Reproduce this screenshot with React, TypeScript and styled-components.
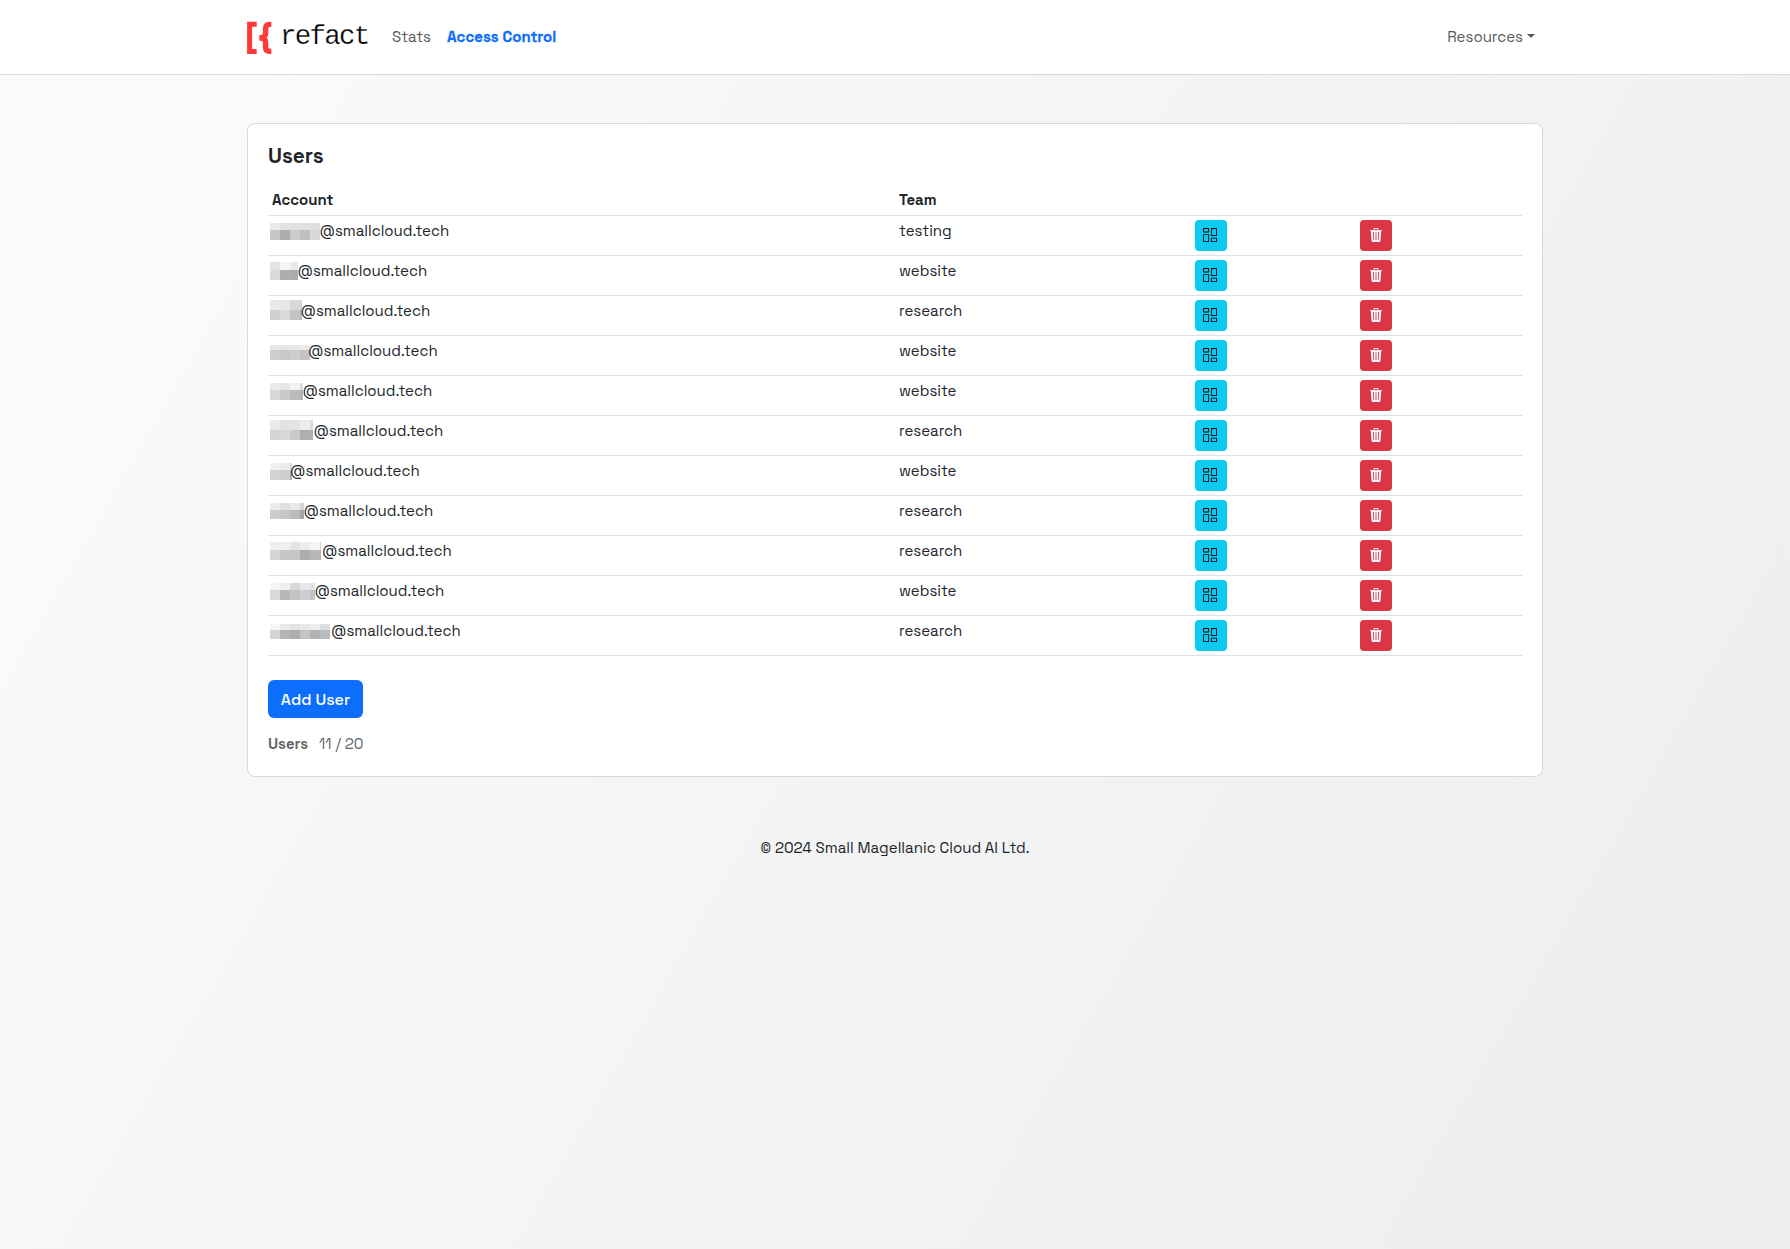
import React from "react";
import styled, { createGlobalStyle } from "styled-components";
import { BsColumnsGap, BsTrash3Fill } from "react-icons/bs";

const GlobalStyle = createGlobalStyle`
  *, *::before, *::after { box-sizing: border-box; }
  body {
    margin: 0;
    min-height: 100vh;
    background: linear-gradient(120deg, #fdfbfb 0%, #ebedee 100%);
    font-family: "Space Grotesk", Inter, sans-serif;
    font-size: 15px;
    line-height: 24px;
    color: #212529;
  }
`;

const Navbar = styled.nav`
  height: 75px;
  background: #fff;
  border-bottom: 1px solid #d8dadb;
`;

const NavInner = styled.div`
  width: 1296px;
  height: 74px;
  margin: 0 auto;
  display: flex;
  align-items: center;
`;

const Brand = styled.a`
  display: flex;
  align-items: center;
  width: 145px;
`;

const Wordmark = styled.span`
  margin-left: 8px;
  font-family: "Liberation Mono", monospace;
  font-size: 27.5px;
  letter-spacing: -1.75px;
  line-height: 30px;
  color: #000;
  -webkit-text-stroke: 0.25px #fff;
`;

const NavLink = styled.a<{ $active?: boolean }>`
  color: ${(p) => (p.$active ? "#0d6efd" : "#595959")};
  font-weight: ${(p) => (p.$active ? 700 : 400)};
  letter-spacing: ${(p) => (p.$active ? 0.03 : 0)}px;
  -webkit-text-stroke: ${(p) => (p.$active ? 0.3 : 0)}px;
  margin-right: ${(p) => (p.$active ? 0 : 16)}px;
`;

const Dropdown = styled(NavLink)`
  display: flex;
  align-items: center;
  margin-left: auto;
  margin-right: 8px;
  &::after {
    content: "";
    margin-left: 4px;
    margin-top: -2px;
    border-top: 4px solid;
    border-left: 4px solid transparent;
    border-right: 4px solid transparent;
  }
`;

const Card = styled.main`
  width: 1296px;
  height: 654px;
  margin: 48px auto 0;
  padding: 20px 20px 0;
  background: #fff;
  border: 1px solid #d8d9da;
  border-radius: 8px;
`;

const Title = styled.h1`
  margin: 0 0 15px;
  font-size: 20.8px;
  line-height: 24px;
  font-weight: 700;
`;

const Table = styled.table`
  width: 1254px;
  table-layout: fixed;
  border-collapse: separate;
  border-spacing: 0;
`;

const HeadCell = styled.th<{ $width: number }>`
  width: ${(p) => p.$width}px;
  height: 33px;
  padding: 5px 4px 3px;
  border-bottom: 1px solid #dee2e6;
  text-align: left;
  font-weight: 700;
`;

const Cell = styled.td`
  height: 40px;
  padding: 4px;
  border-bottom: 1px solid #dee0e3;
  vertical-align: top;
`;

const Account = styled.div`
  display: flex;
  height: 24px;
  margin-left: -2px;
`;

const Mosaic = styled.span<{ $offset: number; $gap: number; $width: number }>`
  display: flex;
  flex-direction: column;
  flex: none;
  align-self: flex-start;
  width: ${(p) => p.$width}px;
  margin-top: ${(p) => p.$offset}px;
  margin-right: ${(p) => p.$gap}px;
`;

const MosaicRow = styled.span<{ $height: number }>`
  display: flex;
  height: ${(p) => p.$height}px;
  overflow: hidden;
`;

const Tile = styled.span<{ $color: string }>`
  flex: 0 0 10px;
  background: #${(p) => p.$color};
`;

const Domain = styled.span`
  line-height: 22px;
`;

const Team = styled.span`
  display: block;
  line-height: 22px;
`;

const IconButton = styled.button<{ $danger?: boolean }>`
  display: flex;
  align-items: center;
  justify-content: center;
  width: 32px;
  height: 31px;
  padding: ${(p) => (p.$danger ? "0 0 2px" : "0 2px 2px 0")};
  border: 0;
  border-radius: 4px;
  font-size: 14px;
  color: ${(p) => (p.$danger ? "#fff" : "#000")};
  background: ${(p) => (p.$danger ? "#dc3545" : "#0dcaf0")};
`;

const AddButton = styled.button`
  display: block;
  width: 95px;
  height: 38px;
  margin: 24px 0 14px;
  padding: 1px 0 0;
  border: 0;
  border-radius: 6px;
  background: #0d6efd;
  color: #fff;
  font: inherit;
  font-size: 16px;
  font-weight: 500;
`;

const Count = styled.div`
  display: flex;
  color: #63676a;
`;

const CountLabel = styled.b`
  width: 51px;
`;

const Footer = styled.footer`
  margin-top: 59px;
  text-align: center;
  letter-spacing: 0.03px;
`;

type User = {
  team: string;
  width: number;
  offset: number;
  at: number;
  depth: number;
  top: string;
  bottom: string;
};

const users: User[] = [
  { team: "testing", width: 50, offset: 3, at: 320, depth: 10, top: "e9e9e9 e2e2e2 e0e0e0 e0e0e0 dcdee0", bottom: "c6c6c7 adadaf cbcbcd bebfc1 d8d8d8" },
  { team: "website", width: 28, offset: 2, at: 298, depth: 10, top: "e4e4e4 f5f5f5 e8e8e8", bottom: "dadbda adaeb0 aaabad" },
  { team: "research", width: 32, offset: 0, at: 301, depth: 10, top: "e8e9e8 e6e7e7 d6d8da d0d1d3", bottom: "cfd0d2 d8d9d8 c3c4c6 b8b9ba" },
  { team: "website", width: 40, offset: 5, at: 308.5, depth: 10, top: "e8e9e8 e6e7e6 e8e8e8 ececec", bottom: "cccdcf c8c8ca cccdcf c3c3c5" },
  { team: "website", width: 33, offset: 3, at: 303, depth: 10, top: "e9ebea e6e6e6 f2f2f2 dcdcdc", bottom: "d8d8d8 c9c9cb b9babc b2b3b5" },
  { team: "research", width: 43, offset: 0, at: 314, depth: 10, top: "e9ebea e2e4e3 e4e4e4 ededee dddddd", bottom: "d5d5d7 d6d7d8 c9c9cb afafb1 afafb1" },
  { team: "website", width: 22, offset: 3, at: 290.5, depth: 10, top: "f0f0f0 ececec d5d5d5", bottom: "d2d2d4 cccdcf aaaaac" },
  { team: "research", width: 34, offset: 3, at: 304, depth: 9, top: "ececec e0e0e0 e8e9e8 d5d5d5", bottom: "cccdcf c6c6c8 bbbcbe a4a4a6" },
  { team: "research", width: 51, offset: 2, at: 322.5, depth: 10, top: "eff1f0 eff1f0 e4e4e4 ededed f5f5f5 d5d5d5", bottom: "d6d6d6 c6c7c8 c6c6c8 adaeb0 b8b8ba b5b5b7" },
  { team: "website", width: 45, offset: 3, at: 315, depth: 10, top: "f5f5f5 eeeeef d8d8da e8e8e8 e2e2e2", bottom: "d9d9d9 b8b8ba c3c3c5 cfcfd1 c3c3c5" },
  { team: "research", width: 60, offset: 4, at: 331.5, depth: 9, top: "f5f5f5 ebebeb e4e4e4 e8e9e8 ededee dcdddf", bottom: "d4d4d6 b5b5b7 adaeb0 c3c4c6 b0b1b3 bbbcbe" },
];

function HiddenName({ user }: { user: User }) {
  return (
    <Mosaic $width={user.width} $offset={user.offset} $gap={user.at - 270.5 - user.width}>
      <MosaicRow $height={10 - user.offset}>
        {user.top.split(" ").map((c, i) => <Tile key={i} $color={c} />)}
      </MosaicRow>
      <MosaicRow $height={user.depth}>
        {user.bottom.split(" ").map((c, i) => <Tile key={i} $color={c} />)}
      </MosaicRow>
    </Mosaic>
  );
}

function LogoMark() {
  return (
    <svg width="25" height="34" viewBox="0 0 25 34" fill="none" stroke="#ff3838">
      <path d="M9.7 4.3H2.6V31.4H9.7" strokeWidth="5" />
      <path d="M24.3 4.4H22.5Q18.6 4.4 18.6 8.2V13.2Q18.6 17.8 12.3 17.8Q18.6 17.8 18.6 22.4V27.5Q18.6 31.3 22.5 31.3H24.3" strokeWidth="5.4" />
    </svg>
  );
}

export default function App() {
  return (
    <>
      <GlobalStyle />
      <Navbar>
        <NavInner>
          <Brand><LogoMark /><Wordmark>refact</Wordmark></Brand>
          <NavLink>Stats</NavLink>
          <NavLink $active>Access Control</NavLink>
          <Dropdown>Resources</Dropdown>
        </NavInner>
      </Navbar>
      <Card>
        <Title>Users</Title>
        <Table>
          <thead>
            <tr>
              <HeadCell $width={627}>Account</HeadCell>
              <HeadCell $width={296}>Team</HeadCell>
              <HeadCell $width={165} />
              <HeadCell $width={166} />
            </tr>
          </thead>
          <tbody>
            {users.map((user, i) => (
              <tr key={i}>
                <Cell><Account><HiddenName user={user} /><Domain>@smallcloud.tech</Domain></Account></Cell>
                <Cell><Team>{user.team}</Team></Cell>
                <Cell><IconButton><BsColumnsGap /></IconButton></Cell>
                <Cell><IconButton $danger><BsTrash3Fill /></IconButton></Cell>
              </tr>
            ))}
          </tbody>
        </Table>
        <AddButton>Add User</AddButton>
        <Count><CountLabel>Users</CountLabel><span>11 / 20</span></Count>
      </Card>
      <Footer>© 2024 Small Magellanic Cloud AI Ltd.</Footer>
    </>
  );
}
